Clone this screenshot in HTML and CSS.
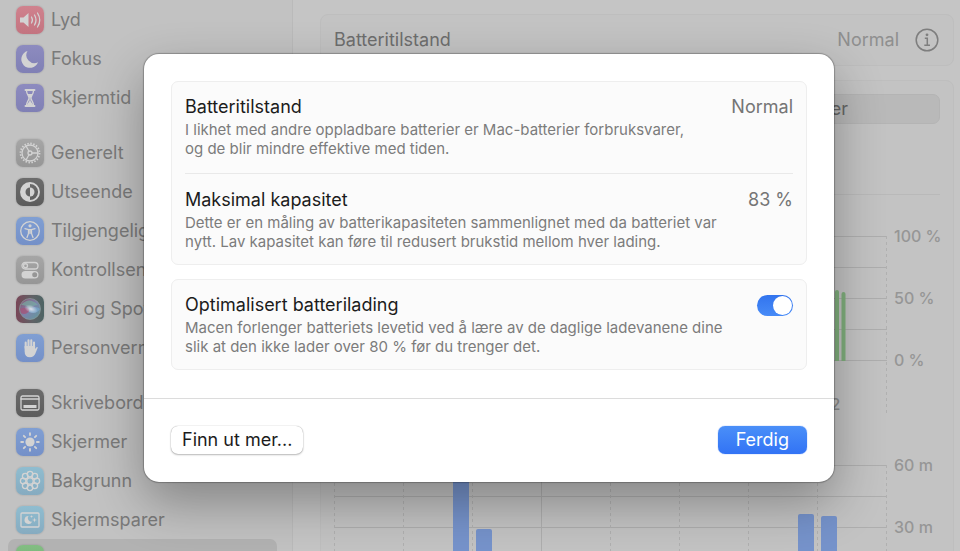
FILE: index.html
```
<!DOCTYPE html>
<html lang="nb">
<head>
  <meta charset="UTF-8">
  <meta name="viewport" content="width=device-width, initial-scale=1.0">
  <title>Batteri</title>
  <link rel="stylesheet" href="styles.css">
</head>
<body>
  <div class="window">
    <nav class="sidebar">
      <ul class="nav-group">
        <li><a href="#lyd">
          <svg class="icon pink" viewBox="0 0 28 28"><path fill="currentColor" d="M4 11.5h3.5L12.5 7v14l-5-4.500H4z"/><path class="line" d="M15.500 11q1.800 3 0 6M18.500 9q3 5 0 10M21.500 7q4.500 7 0 14"/></svg>
          Lyd</a></li>
        <li><a href="#fokus">
          <svg class="icon indigo" viewBox="0 0 28 28"><path fill="currentColor" d="M11.500 6a8 8 0 0 0 10.500 11.200A8.600 8.600 0 1 1 11.500 6z"/></svg>
          Fokus</a></li>
        <li><a href="#skjermtid">
          <svg class="icon indigo" viewBox="0 0 28 28"><path class="line thick" d="M9.500 6h9M9.500 22h9"/><path class="line" d="M10.500 6.500c0 4 2.500 5 2.500 7.500s-2.500 3.500-2.500 7.500M17.500 6.500c0 4-2.500 5-2.500 7.500s2.500 3.500 2.500 7.500"/><path fill="currentColor" d="M11.500 10h5l-2 4v3l3 4.500h-7l3-4.500v-3z"/></svg>
          Skjermtid</a></li>
      </ul>
      <ul class="nav-group">
        <li><a href="#generelt">
          <svg class="icon gray" viewBox="0 0 28 28"><circle class="line" cx="14" cy="14" r="8"/><circle class="teeth" cx="14" cy="14" r="9.500"/><circle class="line" cx="14" cy="14" r="2"/><path class="line" d="M16 14h6M13 12.300L10 7M13 15.700L10 21"/></svg>
          Generelt</a></li>
        <li><a href="#utseende">
          <svg class="icon dark" viewBox="0 0 28 28"><circle class="line thick" cx="14" cy="14" r="9"/><path fill="currentColor" d="M14 5a9 9 0 0 0 0 18v-4.500a4.500 4.500 0 0 1 0-9z"/><path fill="currentColor" d="M14 9.500a4.500 4.500 0 0 1 0 9z"/></svg>
          Utseende</a></li>
        <li><a href="#tilgjengelighet">
          <svg class="icon blue" viewBox="0 0 28 28"><circle class="line" cx="14" cy="14" r="9.300"/><circle cx="14" cy="8.800" r="1.600" fill="currentColor"/><path class="line" d="M9 11.700l3.500.9h3l3.500-.9M12.500 13v3.500L11 20.500M15.500 13v3.500l1.500 4M14 13v3.500"/></svg>
          Tilgjengelighet</a></li>
        <li><a href="#kontrollsenter">
          <svg class="icon gray" viewBox="0 0 28 28"><rect class="line" x="6" y="6.500" width="16" height="6.500" rx="3.250"/><circle class="line" cx="9.500" cy="9.750" r="2"/><rect x="5.500" y="15" width="17" height="7.500" rx="3.750" fill="currentColor"/><circle cx="18.700" cy="18.750" r="2.500" fill="#969696"/></svg>
          Kontrollsenter</a></li>
        <li><a href="#siri">
          <svg class="icon siri" viewBox="0 0 28 28">
            <defs>
              <linearGradient id="orb" x1="0" y1="0" x2="1" y2="1"><stop offset="0" stop-color="#8a4d68"/><stop offset=".5" stop-color="#7d83ab"/><stop offset="1" stop-color="#5f9a9a"/></linearGradient>
              <radialGradient id="glow"><stop offset="0" stop-color="#dde0ea"/><stop offset="1" stop-color="#dde0ea" stop-opacity="0"/></radialGradient>
            </defs>
            <circle cx="14" cy="14" r="10.500" fill="url(#orb)" stroke="#899c9c" stroke-width=".7"/><path fill="#77a99f" opacity=".7" d="M5 10q8-9 17 0-5 0-8 4-3-4-9-4z"/><path fill="#a2567a" opacity=".8" d="M4 14q6-3 10 1-4 6-9 3z"/><path fill="#78a5c9" opacity=".8" d="M13 14q6-4 11 0-4 6-11 3z"/><ellipse cx="15" cy="14" rx="7" ry="4" fill="url(#glow)" transform="rotate(20 15 14)"/>
          </svg>
          Siri og Spotlight</a></li>
        <li><a href="#personvern">
          <svg class="icon blue" viewBox="0 0 28 28"><path class="finger" d="M9.700 14V8.500M12.500 13V6.300M15.300 13V6.300M18 14V8.500"/><path fill="currentColor" d="M8.600 12h10.500v3l1.100-1.500q1.600-1 1.500.3l-2.300 5.700q-1.400 3.700-5.400 3.700-5.400 0-5.400-6z"/></svg>
          Personvern og sikkerhet</a></li>
      </ul>
      <ul class="nav-group">
        <li><a href="#skrivebord">
          <svg class="icon dark" viewBox="0 0 28 28"><rect class="line" x="5" y="7" width="18" height="14" rx="1.500"/><path class="line" d="M5 10h18"/><rect x="7.500" y="16" width="13" height="3" fill="currentColor"/></svg>
          Skrivebord og Dock</a></li>
        <li><a href="#skjermer">
          <svg class="icon blue" viewBox="0 0 28 28"><circle cx="14" cy="14" r="4.600" fill="currentColor"/><path class="line thick" d="M14 5.200v1.900M14 20.900v1.900M5.200 14h1.900M20.900 14h1.900M7.800 7.800l1.300 1.300M18.900 18.900l1.300 1.300M20.200 7.800l-1.300 1.300M9.100 18.900l-1.300 1.300"/></svg>
          Skjermer</a></li>
        <li><a href="#bakgrunn">
          <svg class="icon cyan" viewBox="0 0 28 28"><g class="line"><circle cx="14" cy="14" r="3.200"/><circle cx="14" cy="7.200" r="2.800"/><circle cx="18.800" cy="9.200" r="2.800"/><circle cx="20.800" cy="14" r="2.800"/><circle cx="18.800" cy="18.800" r="2.800"/><circle cx="14" cy="20.800" r="2.800"/><circle cx="9.200" cy="18.800" r="2.800"/><circle cx="7.200" cy="14" r="2.800"/><circle cx="9.200" cy="9.200" r="2.800"/></g></svg>
          Bakgrunn</a></li>
        <li><a href="#skjermsparer">
          <svg class="icon cyan" viewBox="0 0 28 28"><rect class="line" x="5" y="7" width="18" height="14" rx="1"/><path fill="currentColor" d="M12.500 10a3.500 3.500 0 0 0 3.700 5.500A4 4 0 1 1 12.500 10zM18.500 11.500l.6 1.900 1.900.6-1.900.6-.6 1.900-.6-1.900-1.900-.6 1.900-.6zM15.500 9l.4 1.100 1.100.4-1.100.4-.4 1.100-.4-1.100-1.100-.4 1.100-.4z"/></svg>
          Skjermsparer</a></li>
        <li><a class="selected" href="#batteri" aria-label="Batteri">
          <svg class="icon green" viewBox="0 0 28 28"><rect class="line" x="5" y="10" width="16" height="8" rx="2"/><rect x="7" y="12" width="12" height="4" fill="currentColor"/></svg>
        </a></li>
      </ul>
    </nav>

    <main class="content">
      <section class="panel health">
        <span>Batteritilstand</span>
        <span class="health-value">Normal</span>
        <button class="info" aria-label="Info">
          <svg viewBox="0 0 24 24"><circle cx="12" cy="12" r="10.800"/><circle class="dot" cx="12" cy="6.800" r="1.400"/><path d="M9.800 10.300h2.500v7M9.300 17.300h5.700"/></svg>
        </button>
      </section>

      <section class="panel usage">
        <div class="segmented">
          <button>Siste 24 timer</button>
          <button>Siste 10 dager</button>
        </div>
        <div class="chart level">
          <div class="plot">
            <svg viewBox="0 0 553 178" preserveAspectRatio="none">
              <path class="grid" d="M0 .5h553M0 31.500h553M0 62.500h553M0 93.500h553M0 124.500h553M207.500 0v178"/>
              <path class="grid dashed" d="M.5 0v178M69.500 0v178M138.500 0v178M276.500 0v178M345.500 0v178M414.500 0v178M552.500 0v178"/>
              <path class="green-bar" d="M501 125V56q0-2 2-2t2 2v69zM507.500 125V58q0-2 2-2t2 2v67z"/>
            </svg>
            <div class="hours"><span>15</span><span>18</span><span>21</span><span>00</span><span>03</span><span>06</span><span>09</span><span>12</span></div>
          </div>
          <div class="scale"><span>100 %</span><span>50 %</span><span>0 %</span></div>
        </div>
        <div class="chart">
          <div class="plot">
            <svg viewBox="0 0 553 178" preserveAspectRatio="none">
              <path class="grid" d="M0 .5h553M0 31.500h553M0 62.500h553M0 93.500h553M0 124.500h553M207.500 0v178"/>
              <path class="grid dashed" d="M.5 0v178M69.500 0v178M138.500 0v178M276.500 0v178M345.500 0v178M414.500 0v178M483.500 0v178M552.500 0v178"/>
              <path class="blue-bar" d="M119 125V2h16v123zM142 125V66q0-2 2-2h12q2 0 2 2v59zM464 125V51q0-2 2-2h12q2 0 2 2v74zM487 125V53q0-2 2-2h12q2 0 2 2v72z"/>
            </svg>
          </div>
          <div class="scale"><span>60 m</span><span>30 m</span></div>
        </div>
      </section>
    </main>
  </div>

  <div class="overlay">
    <div class="sheet" role="dialog" aria-modal="true" aria-label="Batteritilstand">
      <div class="sheet-body">
        <div class="card">
          <div class="row">
            <div class="row-head"><h2>Batteritilstand</h2><span>Normal</span></div>
            <p>I likhet med andre oppladbare batterier er Mac-batterier forbruksvarer,<br>og de blir mindre effektive med tiden.</p>
          </div>
          <div class="row">
            <div class="row-head"><h2>Maksimal kapasitet</h2><span>83 %</span></div>
            <p>Dette er en måling av batterikapasiteten sammenlignet med da batteriet var<br>nytt. Lav kapasitet kan føre til redusert brukstid mellom hver lading.</p>
          </div>
        </div>
        <div class="card">
          <div class="row">
            <div class="row-head">
              <label for="optimize">Optimalisert batterilading</label>
              <input class="switch" type="checkbox" id="optimize" checked>
            </div>
            <p>Macen forlenger batteriets levetid ved å lære av de daglige ladevanene dine<br>slik at den ikke lader over 80 % før du trenger det.</p>
          </div>
        </div>
      </div>
      <div class="sheet-footer">
        <button class="btn">Finn ut mer...</button>
        <button class="btn primary">Ferdig</button>
      </div>
    </div>
  </div>
</body>
</html>
```
FILE: styles.css
```
* {
  box-sizing: border-box;
}

body {
  margin: 0;
  height: 100vh;
  overflow: hidden;
  position: relative;
  font-family: Inter, "Liberation Sans", sans-serif;
  font-size: 18px;
  line-height: 24px;
  background: #c5c5c5;
  color: #6e6e6e;
}

button {
  font: inherit;
  color: inherit;
  border: none;
  padding: 0;
  background: none;
}

h2, p, ul {
  margin: 0;
  padding: 0;
}

.window {
  display: flex;
  height: 100%;
  overflow: hidden;
}

/* sidebar */
.sidebar {
  flex: 0 0 293px;
  padding: 0 15px 0 8px;
  background: #c2c2c2;
  border-right: 1px solid #bababa;
}

.nav-group {
  list-style: none;
  margin-bottom: 16px;
}

.nav-group a {
  display: flex;
  align-items: center;
  gap: 7px;
  height: 39px;
  padding-left: 8px;
  border-radius: 7px;
  color: #7a7a7a;
  text-decoration: none;
  white-space: nowrap;
}

.nav-group .selected {
  background: #b2b2b2;
}

.icon {
  width: 28px;
  height: 28px;
  flex: none;
  border-radius: 7px;
  color: #d3d3d3;
  box-shadow: 0 0 2px rgba(0, 0, 0, 0.2);
}

.pink { background: linear-gradient(#d0828e, #c37480); }
.indigo { background: linear-gradient(#8d8bbf, #8080b5); }
.gray { background: linear-gradient(#a6a6a6, #969696); }
.dark { background: linear-gradient(#6c6c6c, #5c5c5c); }
.blue { background: linear-gradient(#809fd3, #7490c8); }
.cyan { background: linear-gradient(#8fbdd0, #86abc0); }
.green { background: linear-gradient(#82bd82, #74af74); }
.siri { background: linear-gradient(90deg, #794758, #5f6266 60%, #4d6464); }

.line {
  fill: none;
  stroke: currentColor;
  stroke-width: 1.3;
  stroke-linecap: round;
}

.thick {
  stroke-width: 1.9;
}

.teeth {
  fill: none;
  stroke: currentColor;
  stroke-width: 1.8;
  stroke-dasharray: 1.5 1.484;
}

.finger {
  fill: none;
  stroke: currentColor;
  stroke-width: 2.1;
  stroke-linecap: round;
}

/* battery page */
.content {
  flex: 1;
  min-width: 0;
  padding: 14px 6px 0 27px;
}

.panel {
  border: 1px solid #bebebe;
  border-radius: 8px;
  background: #c3c3c3;
}

.health {
  display: flex;
  align-items: center;
  height: 52px;
  margin-bottom: 14px;
  padding: 0 14px 0 13px;
}

.health-value {
  margin-left: auto;
  color: #8f8f8f;
}

.info {
  width: 24px;
  height: 24px;
  margin-left: 16px;
}

.info svg {
  display: block;
  fill: none;
  stroke: #7e7e7e;
  stroke-width: 1.5;
}

.info .dot {
  fill: #7e7e7e;
  stroke: none;
}

.usage {
  padding: 13px;
}

.segmented {
  display: grid;
  grid-template-columns: 1fr 1fr;
  height: 30px;
  margin-bottom: 70px;
  border: 1px solid #b4b4b4;
  border-radius: 7px;
  background: #b9b9b9;
  color: #666;
}

.chart {
  display: flex;
  gap: 7px;
  margin-bottom: 51px;
}

.level {
  padding-top: 41px;
  border-top: 1px solid #b9b9b9;
}

.plot {
  flex: 1;
}

.plot svg {
  display: block;
  width: 100%;
  height: 178px;
}

.grid {
  fill: none;
  stroke: #aeaeae;
  stroke-width: 1;
}

.dashed {
  stroke: #b0b0b0;
  stroke-dasharray: 3 3;
}

.green-bar { fill: #80af7d; }
.blue-bar { fill: #7693cb; }

.hours {
  display: grid;
  grid-template-columns: repeat(8, 1fr);
  height: 20px;
  margin-top: -20px;
  font-size: 16px;
  font-weight: 500;
  line-height: 20px;
  color: #8c8c8c;
}

.hours span {
  padding-left: 6px;
}

.scale {
  display: flex;
  flex-direction: column;
  gap: 42px;
  width: 46px;
  margin-top: -10px;
  font-size: 16px;
  font-weight: 500;
  line-height: 20px;
  color: #969696;
  white-space: nowrap;
}

/* dialog */
.overlay {
  position: absolute;
  inset: 0;
  display: flex;
  align-items: flex-start;
  padding: 54px 126px 0 144px;
}

.sheet {
  flex: 1;
  border-radius: 15px;
  background: #fff;
  box-shadow: 0 0 1px 1px rgba(0, 0, 0, 0.25), 0 20px 50px rgba(0, 0, 0, 0.32);
}

.sheet-body {
  display: flex;
  flex-direction: column;
  gap: 14px;
  padding: 27px 27px 28px;
}

.card {
  padding: 0 13px;
  border: 1px solid #eee;
  border-radius: 7px;
  background: #fbfbfb;
}

.row {
  padding: 13px 0;
}

.row + .row {
  margin-top: 2px;
  padding-top: 14px;
  border-top: 1px solid #e9e9e9;
}

.row-head {
  display: flex;
  align-items: center;
  justify-content: space-between;
  color: #757575;
}

.row-head h2,
.row-head label {
  font-size: 18px;
  font-weight: 400;
  color: #1c1c1c;
}

.row p {
  margin-top: 1px;
  font-size: 15px;
  line-height: 19px;
  color: #7c7c7c;
}

.switch {
  appearance: none;
  width: 36px;
  height: 21px;
  margin: 0;
  padding: 1px;
  border-radius: 11px;
  background: #ccc;
}

.switch::before {
  content: "";
  display: block;
  width: 19px;
  height: 19px;
  border-radius: 50%;
  background: #fff;
}

.switch:checked {
  background: linear-gradient(#3274ee, #478bf7);
}

.switch:checked::before {
  margin-left: auto;
}

.sheet-footer {
  display: flex;
  justify-content: space-between;
  padding: 27px 27px 28px;
  border-top: 1px solid #dcdcdc;
}

.btn {
  height: 28px;
  padding: 0 11px;
  border-radius: 7px;
  background: #fff;
  color: #1c1c1c;
  box-shadow: 0 0 1px rgba(0, 0, 0, 0.4), 0 1px 2px rgba(0, 0, 0, 0.25);
}

.primary {
  padding: 0 18px;
  background: linear-gradient(#4a8ff8, #3273f5);
  color: #fff;
  box-shadow: 0 0 1px #3273f5;
}
```
